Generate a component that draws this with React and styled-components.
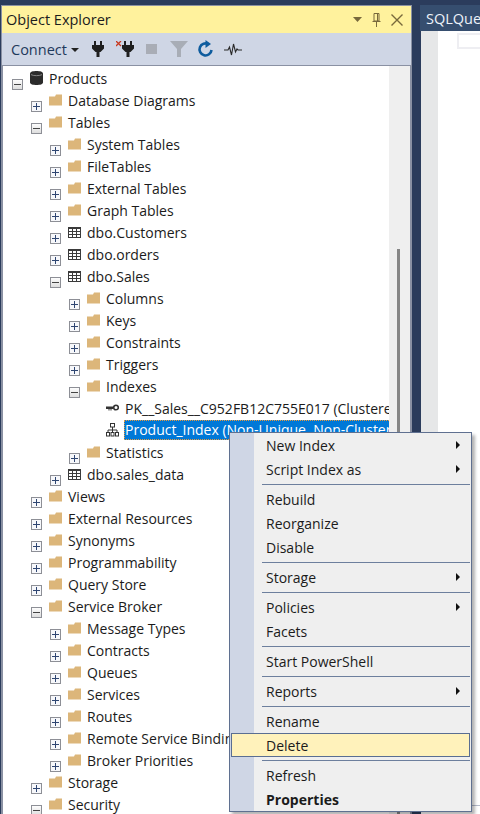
import React from "react";
import styled, { createGlobalStyle } from "styled-components";

const Global = createGlobalStyle`
  html, body { margin: 0; padding: 0; background: #2b3c5c; }
  * { box-sizing: border-box; }
`;
const FONT = `"Open Sans", "Noto Sans", "Liberation Sans", sans-serif`;

const Root = styled.div`
  position: relative; width: 480px; height: 814px; overflow: hidden;
  display: flex; padding: 5px 0 0 1px; background: #2b3c5c;
  font-family: ${FONT}; font-size: 14px; color: #1b1b1b;
`;
const Panel = styled.div`
  width: 411px; flex: none; display: flex; flex-direction: column;
  border: 1px solid #8a91a3; border-bottom: none;
`;
const TitleBar = styled.div`
  height: 27px; flex: none; display: flex; align-items: center;
  padding-left: 4px; background: #fff29d; font-size: 14.5px; color: #1c1c1c;
`;
const TitleText = styled.span` flex: 1; `;
const TitleIcons = styled.div`
  display: flex; align-items: center; gap: 10px; padding-right: 8px; color: #78693c;
`;
const Toolbar = styled.div`
  height: 32px; flex: none; display: flex; align-items: center;
  padding-left: 9px; background: #cfd6e5;
`;
const ConnectBtn = styled.div`
  width: 73px; display: flex; align-items: center; gap: 4px; color: #1e395b; font-size: 14.5px;
`;
const Caret = styled.span`
  width: 0; height: 0; margin-top: 2px;
  border-left: 4px solid transparent; border-right: 4px solid transparent; border-top: 4px solid #222;
`;
const ToolCell = styled.div`
  width: 27px; height: 20px; display: flex; align-items: center; justify-content: center;
`;
const Tree = styled.div`
  flex: 1; min-height: 0; display: flex; overflow: hidden; background: #fff;
  border: 1px solid #8a91a3; border-bottom: none;
`;
const TreeList = styled.div`
  flex: 1; min-width: 0; overflow: hidden; padding-top: 1px;
`;
const Scrollbar = styled.div`
  width: 21px; flex: none; background: #efefef; padding: 183px 0 0 8px; display: flex;
`;
const Thumb = styled.div` width: 3px; background: #868686; `;
const Row = styled.div`
  height: 22px; display: flex; align-items: center; white-space: nowrap;
  padding-left: ${p => 9 + p.$level * 19}px;
`;
const ExpSlot = styled.span`
  width: 11px; height: 11px; flex: none; margin-right: 7px; margin-top: 4px; display: block;
`;
const IconSlot = styled.span`
  width: 13px; flex: none; margin-right: 6px; display: flex; align-items: center; justify-content: center;
`;
const Label = styled.span`
  ${p => p.$selected && `
    background: #0078d7; color: #fff; outline: 1px dotted #e89a3c; outline-offset: -1px;
    margin-left: -1px; padding: 0 1px; height: 20px; line-height: 20px;
  `}
`;
const Gutter = styled.div`
  flex: 1; min-width: 0; margin-left: 8px; display: flex; flex-direction: column;
`;
const Tab = styled.div`
  height: 26px; flex: none; background: #364e6f; color: #eef3fa; padding-left: 6px;
  display: flex; align-items: center; white-space: nowrap; overflow: hidden; font-size: 14.5px;
`;
const Editor = styled.div`
  flex: 1; min-height: 0; display: flex; flex-direction: column; background: #fff; border-left: 1px solid #2b3c5c;
`;
const EditorMain = styled.div` flex: 1; display: flex; min-height: 0; `;
const Margin = styled.div` width: 17px; flex: none; background: #e6e7e8; `;
const Code = styled.div` flex: 1; padding: 2px 0 0 19px; `;
const CaretBox = styled.div`
  height: 16px; border: 2px solid #eeeef2; border-right: none;
`;
const ResultPane = styled.div`
  height: 9px; flex: none; background: #fff; border-top: 1px solid #b5bbca;
`;
const Menu = styled.div`
  position: absolute; left: 229px; top: 432px; width: 243px; height: 380px;
  border: 1px solid #5f7090; box-shadow: 3px 3px 3px rgba(0,0,0,.3);
  background: linear-gradient(90deg, #cfd6e5 24px, #efefef 24px);
  font-size: 14px; color: #1b1b1b;
`;
const Item = styled.div`
  height: 24px; margin: 0 1px; padding: 0 9px 0 34px; display: flex; align-items: center;
  justify-content: space-between; border: 1px solid ${p => p.$hot ? "#5a6e92" : "transparent"};
  background: ${p => p.$hot ? "#fff2bb" : "transparent"};
  font-weight: ${p => p.$bold ? 700 : 400};
`;
const Arrow = styled.span`
  width: 0; height: 0;
  border-top: 4px solid transparent; border-bottom: 4px solid transparent; border-left: 4px solid #111;
`;
const Sep = styled.div`
  height: 1px; margin: 3px 1px 2px 32px; background: #6d7f9d;
`;

const Expander = ({ open }) => (
  <svg width="11" height="11" viewBox="0 0 11 11">
    <defs>
      <linearGradient id="expg" x1="0" y1="0" x2="0" y2="1">
        <stop offset="0" stopColor="#fff" /><stop offset="1" stopColor="#dcdcdc" />
      </linearGradient>
    </defs>
    <rect x=".5" y=".5" width="10" height="10" fill={open ? "url(#expg)" : "#f7f8fb"} stroke="#8d8f96" />
    <rect x="2" y="5" width="7" height="1" fill={open ? "#444" : "#2f4672"} />
    {!open && <rect x="5" y="2" width="1" height="7" fill="#2f4672" />}
  </svg>
);
const Folder = () => (
  <svg width="13" height="12" viewBox="0 0 13 12" style={{ display: "block" }}>
    <path d="M0 2.5H6L7 .5H13V11.5H0Z" fill="#dcb67a" />
  </svg>
);
const TableIcon = () => (
  <svg width="13" height="11" viewBox="0 0 13 11" style={{ display: "block" }}>
    <rect x="0" y="0" width="13" height="11" fill="#3a3a3a" />
    {[0, 1, 2].map(r => [0, 1, 2].map(c => (
      <rect key={`${r}${c}`} x={1 + c * 4} y={2 + r * 3} width="3" height="2" fill="#fff" />
    )))}
  </svg>
);
const DbIcon = () => (
  <svg width="13" height="14" viewBox="0 0 13 14" style={{ display: "block" }}>
    <path d="M0 2.5C0 .8 3 0 6.5 0S13 .8 13 2.5V11.5C13 13.2 10 14 6.5 14S0 13.2 0 11.5Z" fill="#2b2b2b" />
    <path d="M1 3.6C3 5 10 5 12 3.6" stroke="#9a9a9a" strokeWidth=".8" fill="none" />
  </svg>
);
const KeyIcon = () => (
  <svg width="13" height="8" viewBox="0 0 13 8" style={{ display: "block" }}>
    <path d="M0 2.5H7.5V5H5.5V6.5H4.5V5H3.5V6.5H2.5V5H0Z" fill="#333" />
    <circle cx="10" cy="3.5" r="2.3" fill="none" stroke="#333" strokeWidth="1.6" />
  </svg>
);
const IndexIcon = () => (
  <svg width="13" height="14" viewBox="0 0 13 14" fill="none" stroke="#333" style={{ display: "block" }}>
    <rect x="4.5" y=".5" width="4" height="3.5" />
    <path d="M6.5 4V7M2 9.5V7H11V9.5M6.5 7V9.5" />
    <rect x=".5" y="9.5" width="3" height="3.5" />
    <rect x="5" y="9.5" width="3" height="3.5" />
    <rect x="9.5" y="9.5" width="3" height="3.5" />
  </svg>
);
const Plug = ({ x = 0 }) => (
  <g transform={`translate(${x} 0)`} fill="#1f1f1f">
    <rect x="2" y="0" width="2" height="5" /><rect x="8" y="0" width="2" height="5" />
    <path d="M0 4H12V7.5L8.5 11H7.5V16H4.5V11H3.5L0 7.5Z" />
  </g>
);
const tools = [
  <svg key="a" width="12" height="16" viewBox="0 0 12 16"><Plug /></svg>,
  <svg key="b" width="18" height="16" viewBox="0 0 18 16">
    <Plug x={6} />
    <path d="M0 0L5 5M5 0L0 5" stroke="#c8381e" strokeWidth="1.3" fill="none" />
  </svg>,
  <svg key="c" width="11" height="10" viewBox="0 0 11 10"><rect width="11" height="10" fill="#a9adb6" /></svg>,
  <svg key="d" width="18" height="16" viewBox="0 0 18 16"><path d="M0 0H18L11 8V16H7V8Z" fill="#a8adb6" /></svg>,
  <svg key="e" width="17" height="18" viewBox="0 0 17 18" fill="none">
    <path d="M11.5 4.2A6 6 0 1 0 14.5 10" stroke="#0e5c9e" strokeWidth="2.6" />
    <path d="M8.5 0V8L14 4Z" fill="#0e5c9e" />
  </svg>,
  <svg key="f" width="18" height="13" viewBox="0 0 18 13" fill="none">
    <path d="M0 7H4L5.5 4L7.5 12L9.5 1L11.5 9L13 6L14 7H18" stroke="#2a2a2a" strokeWidth="1.1" />
  </svg>,
];

const F = "folder", T = "table";
const rows = [
  [0, "open", "db", "Products"],
  [1, "closed", F, "Database Diagrams"],
  [1, "open", F, "Tables"],
  [2, "closed", F, "System Tables"],
  [2, "closed", F, "FileTables"],
  [2, "closed", F, "External Tables"],
  [2, "closed", F, "Graph Tables"],
  [2, "closed", T, "dbo.Customers"],
  [2, "closed", T, "dbo.orders"],
  [2, "open", T, "dbo.Sales"],
  [3, "closed", F, "Columns"],
  [3, "closed", F, "Keys"],
  [3, "closed", F, "Constraints"],
  [3, "closed", F, "Triggers"],
  [3, "open", F, "Indexes"],
  [4, null, "key", "PK__Sales__C952FB12C755E017 (Clustered)"],
  [4, null, "index", "Product_Index (Non-Unique, Non-Clustered)", true],
  [3, "closed", F, "Statistics"],
  [2, "closed", T, "dbo.sales_data"],
  [1, "closed", F, "Views"],
  [1, "closed", F, "External Resources"],
  [1, "closed", F, "Synonyms"],
  [1, "closed", F, "Programmability"],
  [1, "closed", F, "Query Store"],
  [1, "open", F, "Service Broker"],
  [2, "closed", F, "Message Types"],
  [2, "closed", F, "Contracts"],
  [2, "closed", F, "Queues"],
  [2, "closed", F, "Services"],
  [2, "closed", F, "Routes"],
  [2, "closed", F, "Remote Service Bindings"],
  [2, "closed", F, "Broker Priorities"],
  [1, "closed", F, "Storage"],
  [1, "open", F, "Security"],
];
const icons = { folder: Folder, table: TableIcon, db: DbIcon, key: KeyIcon, index: IndexIcon };

const menu = [
  ["New Index", "arrow"], ["Script Index as", "arrow"], null,
  ["Rebuild"], ["Reorganize"], ["Disable"], null,
  ["Storage", "arrow"], null,
  ["Policies", "arrow"], ["Facets"], null,
  ["Start PowerShell"], null,
  ["Reports", "arrow"], null,
  ["Rename"], ["Delete", "hot"], null,
  ["Refresh"], ["Properties", "bold"],
];

export default function App() {
  return (
    <Root>
      <Global />
      <Panel>
        <TitleBar>
          <TitleText>Object Explorer</TitleText>
          <TitleIcons>
            <svg width="9" height="5" viewBox="0 0 9 5"><path d="M0 0H9L4.5 5Z" fill="currentColor" /></svg>
            <svg width="9" height="14" viewBox="0 0 9 14" fill="none" stroke="currentColor">
              <path d="M2 .5H7V8H2ZM5.5 1V8M.5 8.5H8.5M4.5 9V14" />
            </svg>
            <svg width="12" height="12" viewBox="0 0 12 12" fill="none" stroke="currentColor" strokeWidth="1.4">
              <path d="M.5 .5L11.5 11.5M11.5 .5L.5 11.5" />
            </svg>
          </TitleIcons>
        </TitleBar>
        <Toolbar>
          <ConnectBtn>Connect<Caret /></ConnectBtn>
          {tools.map((t, i) => <ToolCell key={i}>{t}</ToolCell>)}
        </Toolbar>
        <Tree>
          <TreeList>
            {rows.map(([level, exp, icon, text, selected]) => {
              const Ic = icons[icon];
              return (
                <Row key={text} $level={level}>
                  <ExpSlot>{exp && <Expander open={exp === "open"} />}</ExpSlot>
                  <IconSlot><Ic /></IconSlot>
                  <Label $selected={selected}>{text}</Label>
                </Row>
              );
            })}
          </TreeList>
          <Scrollbar><Thumb /></Scrollbar>
        </Tree>
      </Panel>
      <Gutter>
        <Tab>SQLQuery1.sql</Tab>
        <Editor>
          <EditorMain>
            <Margin />
            <Code><CaretBox /></Code>
          </EditorMain>
          <ResultPane />
        </Editor>
      </Gutter>
      <Menu>
        {menu.map((m, i) => m === null ? <Sep key={i} /> : (
          <Item key={m[0]} $hot={m[1] === "hot"} $bold={m[1] === "bold"}>
            {m[0]}
            {m[1] === "arrow" && <Arrow />}
          </Item>
        ))}
      </Menu>
    </Root>
  );
}
